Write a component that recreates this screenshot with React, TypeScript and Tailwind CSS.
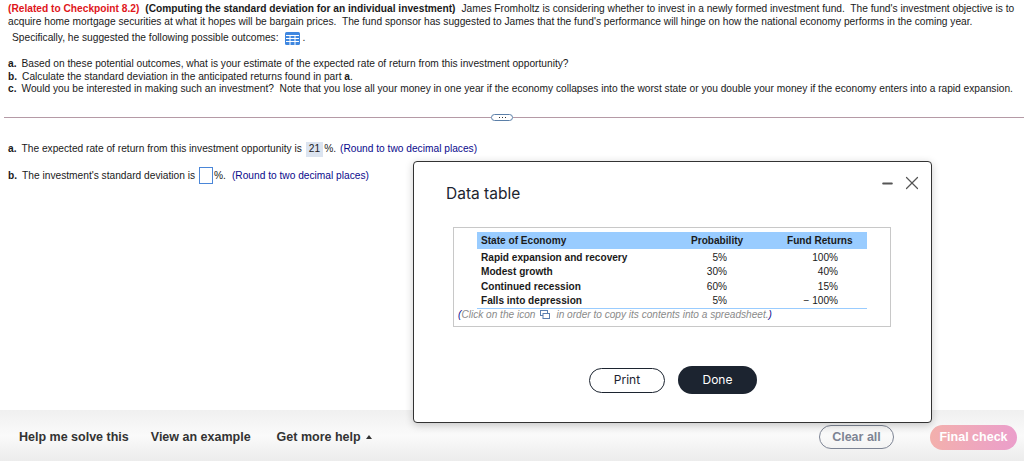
import React from 'react';
import { X, Minus } from 'lucide-react';

const rows = [
  { state: 'Rapid expansion and recovery', probability: '5%', returns: '100%' },
  { state: 'Modest growth', probability: '30%', returns: '40%' },
  { state: 'Continued recession', probability: '60%', returns: '15%' },
  { state: 'Falls into depression', probability: '5%', returns: '− 100%' },
];

const App: React.FC = () => {
  return (
    <div className="relative h-[461px] w-[1024px] overflow-hidden bg-white font-['Liberation_Sans',Arial,sans-serif] text-black flex flex-col">
      {/* Question */}
      <div className="flex-1 min-h-0">
        <div className="pl-[8px] pt-[3px] text-[10.2px] leading-[12.5px] text-[#1a1a1a]">
          <p className="whitespace-nowrap">
            <b className="text-[#e0161b]">(Related to Checkpoint 8.2)</b>
            <b className="ml-[6px]">(Computing the standard deviation for an individual investment)</b>
            <span className="ml-[6px]">James Fromholtz is considering whether to invest in a newly formed investment fund.&nbsp; The fund's investment objective is to</span>
          </p>
          <p className="whitespace-nowrap">acquire home mortgage securities at what it hopes will be bargain prices.&nbsp; The fund sponsor has suggested to James that the fund's performance will hinge on how the national economy performs in the coming year.</p>
          <p className="mt-[2px] ml-[4px] flex items-center h-[16px] whitespace-nowrap">
            Specifically, he suggested the following possible outcomes:
            <svg className="ml-[6px]" width="15" height="13" viewBox="0 0 15 13">
              <rect width="15" height="13" rx="1.5" fill="#3f87e0" />
              <path d="M1 3.5h13M1 6.5h13M1 9.5h13M5 3v10M10 3v10" stroke="#fff" strokeWidth="1" />
            </svg>
            <span className="ml-[3px]">.</span>
          </p>
          <div className="mt-[12px]">
            <p className="whitespace-nowrap"><b>a.</b><span className="ml-[5px]">Based on these potential outcomes, what is your estimate of the expected rate of return from this investment opportunity?</span></p>
            <p className="whitespace-nowrap"><b>b.</b><span className="ml-[5px]">Calculate the standard deviation in the anticipated returns found in part <b>a</b>.</span></p>
            <p className="whitespace-nowrap"><b>c.</b><span className="ml-[5px]">Would you be interested in making such an investment?&nbsp; Note that you lose all your money in one year if the economy collapses into the worst state or you double your money if the economy enters into a rapid expansion.</span></p>
          </div>
        </div>

        {/* Divider */}
        <div className="mt-[19px] ml-[4px] flex items-center h-[5px]">
          <div className="w-[487px] h-px bg-[#b59aa6]" />
          <div className="w-[22px] h-[7px] rounded-full border border-[#5b7fa8] flex items-center justify-center gap-[2px]">
            <span className="w-px h-px bg-[#333]" />
            <span className="w-px h-px bg-[#333]" />
            <span className="w-px h-px bg-[#333]" />
          </div>
          <div className="flex-1 h-px bg-[#b59aa6]" />
        </div>

        {/* Answers */}
        <div className="pl-[8px] pt-[22px] text-[10.2px] text-[#1a1a1a]">
          <p className="flex items-center h-[15px] whitespace-nowrap">
            <b>a.</b>
            <span className="ml-[5px]">The expected rate of return from this investment opportunity is</span>
            <span className="ml-[4px] px-[3px] h-[15px] flex items-center bg-[#dce4f0]">21</span>
            <span className="ml-[1px]">%.</span>
            <span className="ml-[4px] text-[#0a0a8c]">(Round to two decimal places)</span>
          </p>
          <p className="mt-[10px] flex items-center h-[18px] whitespace-nowrap">
            <b>b.</b>
            <span className="ml-[5px]">The investment's standard deviation is</span>
            <span className="ml-[4px] w-[14px] h-[17px] border border-[#4a86d8] bg-white" />
            <span className="ml-[1px]">%.</span>
            <span className="ml-[6px] text-[#0a0a8c]">(Round to two decimal places)</span>
          </p>
        </div>
      </div>

      {/* Footer */}
      <div className="h-[51px] shrink-0 bg-gradient-to-b from-[#f0f0f0] via-[#fafafa] to-[#ececec] flex items-center pl-[19px] pr-[7px] pt-[3px] text-[12.5px] font-bold text-[#333]">
        <span>Help me solve this</span>
        <span className="ml-[22px]">View an example</span>
        <span className="ml-[26px]">Get more help</span>
        <span className="ml-[5px] w-0 h-0 border-x-[3px] border-x-transparent border-b-[4px] border-b-[#333]" />
        <button className="ml-auto w-[75px] h-[24px] rounded-full border border-[#7d8494] text-[#7d8494] bg-transparent">Clear all</button>
        <button className="ml-[36px] w-[87px] h-[25px] rounded-full text-white bg-gradient-to-r from-[#f3b0ac] to-[#eb9ecb]">Final check</button>
      </div>

      {/* Data table dialog */}
      <div className="absolute left-[413px] top-[161px] w-[519px] h-[262px] bg-white border border-[#333] rounded-[4px] shadow-[0_2px_8px_rgba(0,0,0,0.2)] flex flex-col font-['Inter','Liberation_Sans',sans-serif]">
        <div className="absolute right-[8px] top-[10px] flex items-center gap-[6px] text-[#555]">
          <Minus size={15} strokeWidth={3} className="mt-[1px]" />
          <X size={22} strokeWidth={1.3} />
        </div>
        <h2 className="pl-[32px] pt-[22px] text-[15.5px] leading-[20px] text-[#1c2430]">Data table</h2>
        <div className="ml-[39px] mt-[23px] w-[438px] h-[100px] border border-[#c8c8c8] pt-[4px] font-['Liberation_Sans',Arial,sans-serif] text-[10.1px] text-[#1a1a1a]">
          <div className="ml-[23px] w-[390px]">
            <div className="h-[17px] bg-[#99ccff] flex items-center font-bold">
              <span className="pl-[4px] w-[214px]">State of Economy</span>
              <span className="w-[96px]">Probability</span>
              <span>Fund Returns</span>
            </div>
            <div className="pt-[1px] border-b border-[#99ccff]">
              {rows.map((row) => (
                <div key={row.state} className="h-[14.5px] flex items-center">
                  <b className="pl-[4px] w-[190px]">{row.state}</b>
                  <span className="w-[60px] text-right">{row.probability}</span>
                  <span className="w-[111px] text-right">{row.returns}</span>
                </div>
              ))}
            </div>
          </div>
          <p className="ml-[4px] italic text-[#8a8a8a] flex items-center h-[11px] whitespace-nowrap">
            <span className="text-[#0a0a8c]">(</span>Click on the icon
            <svg className="mx-[5px]" width="11" height="9" viewBox="0 0 11 9" fill="none">
              <rect x="0.5" y="0.5" width="7" height="5" stroke="#5a7fb0" />
              <rect x="3" y="3.5" width="6.5" height="5" fill="#fff" stroke="#5a7fb0" />
            </svg>
            in order to copy its contents into a spreadsheet.<span className="text-[#0a0a8c]">)</span>
          </p>
        </div>
        <div className="mt-[39px] flex items-center ml-[175px] text-[12px]">
          <button className="w-[76px] h-[25px] rounded-full border border-[#1c2430] text-[#1c2430]">Print</button>
          <button className="ml-[13px] w-[79px] h-[28px] rounded-full bg-[#1c2430] text-white">Done</button>
        </div>
      </div>
    </div>
  );
};

export default App;
